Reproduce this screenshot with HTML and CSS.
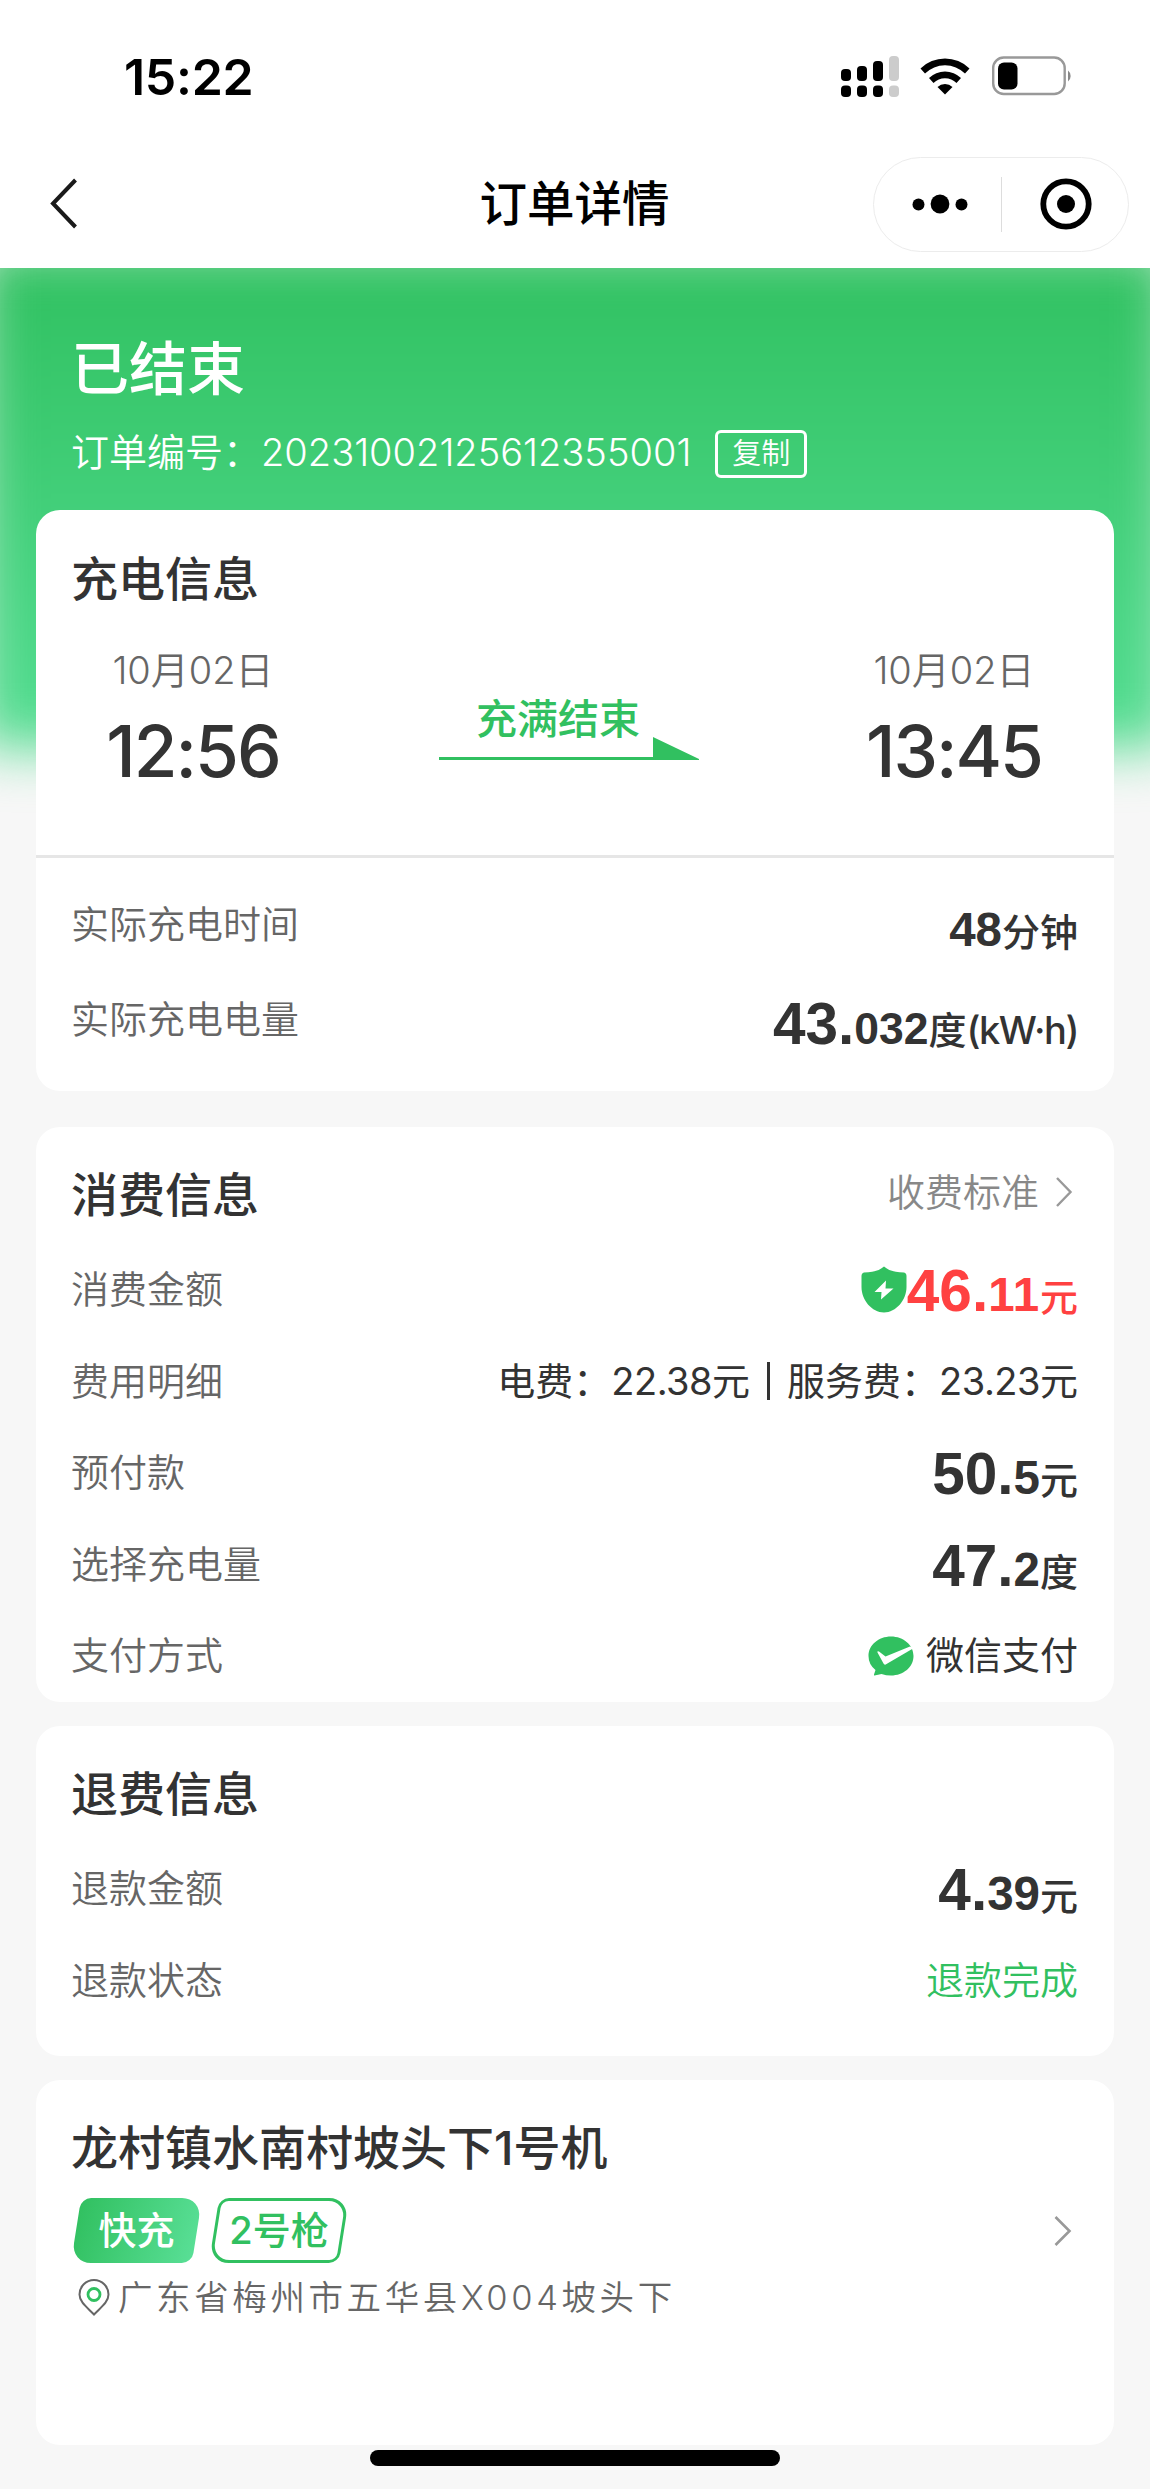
FILE: index.html
```html
<!DOCTYPE html>
<html lang="zh-CN">
  <head>
    <meta charset="utf-8">
    <meta name="viewport" content="width=device-width, initial-scale=1.0">
    <title>订单详情</title>
    <link rel="stylesheet" href="styles.css">
  </head>
  <body>
    <header class="top">
      <div class="statusbar">
        <span class="clock">15:22</span>
        <div class="indicators">
          <svg class="signal" width="59" height="41" viewBox="0 0 59 41">
            <rect x="0" y="13" width="10" height="12" rx="4"/>
            <rect x="16" y="10" width="10" height="15" rx="4"/>
            <rect x="32" y="5" width="10" height="20" rx="4"/>
            <rect x="48" y="0" width="10" height="25" rx="4" fill="#ccc"/>
            <rect x="0" y="29.500" width="10" height="11.500" rx="4"/>
            <rect x="16" y="29.500" width="10" height="11.500" rx="4"/>
            <rect x="32" y="29.500" width="10" height="11.500" rx="4"/>
            <rect x="48" y="29.500" width="10" height="11.500" rx="4" fill="#ccc"/>
          </svg>
          <svg class="wifi" width="50" height="38" viewBox="0 0 50 38">
            <path d="M0.500 11.500A35 35 0 0 1 49.500 11.500L45 16.500A28.500 28.500 0 0 0 5 16.500Z"/>
            <path d="M9 21A23 23 0 0 1 41 21L36.500 26A16.500 16.500 0 0 0 13.500 26Z"/>
            <path d="M17.500 30A11 11 0 0 1 32.500 30L25 37.500Z"/>
          </svg>
          <svg class="battery" width="82" height="40" viewBox="0 0 82 40">
            <rect x="1.200" y="1.500" width="71.500" height="36.500" rx="10.500" fill="none" stroke="#999" stroke-width="2.400"/>
            <rect x="6" y="6.500" width="19.500" height="27" rx="6"/>
            <path d="M76 14.500a7 7 0 0 1 0 11Z" fill="#888"/>
          </svg>
        </div>
      </div>
      <div class="navbar">
        <svg class="back" width="30" height="52" viewBox="0 0 30 52">
          <path d="M26.500 2L4 25.500L26.500 49" fill="none" stroke="#1a1a1a" stroke-width="4"/>
        </svg>
        <h1>订单详情</h1>
        <div class="capsule">
          <svg width="56" height="20" viewBox="0 0 56 20">
            <circle cx="6.500" cy="10.500" r="6"/>
            <circle cx="28" cy="10" r="9.400"/>
            <circle cx="49.500" cy="10.500" r="6"/>
          </svg>
          <i class="capsule-line"></i>
          <svg width="52" height="52" viewBox="0 0 52 52">
            <circle cx="26" cy="26" r="22.700" fill="none" stroke="#000" stroke-width="5.800"/>
            <circle cx="26" cy="26" r="9"/>
          </svg>
        </div>
      </div>
    </header>

    <main>
      <div class="glow"></div>
      <section class="hero">
        <h2>已结束</h2>
        <div class="order-no">
          <span>订单编号：</span>
          <span class="number">20231002125612355001</span>
          <button class="copy">复制</button>
        </div>
      </section>

      <section class="card charge">
        <div class="card-head"><h3>充电信息</h3></div>
        <div class="trip">
          <div class="point">
            <div class="date">10月02日</div>
            <div class="time">12:56</div>
          </div>
          <div class="arrow">
            <div class="reason">充满结束</div>
            <svg width="260" height="24" viewBox="0 0 260 24">
              <path d="M0 20H214V0L260 22V23H0Z" fill="#31c060"/>
            </svg>
          </div>
          <div class="point">
            <div class="date">10月02日</div>
            <div class="time">13:45</div>
          </div>
        </div>
        <div class="row">
          <span class="label">实际充电时间</span>
          <span class="value amount"><small>48</small>分钟</span>
        </div>
        <div class="row row-power">
          <span class="label">实际充电电量</span>
          <span class="value amount"><b>43.</b><small>032</small>度<span class="unit">(kW·h)</span></span>
        </div>
      </section>

      <section class="card fee">
        <div class="card-head">
          <h3>消费信息</h3>
          <a class="more">收费标准
            <svg width="18" height="32" viewBox="0 0 18 32">
              <path d="M2 2L15.500 16L2 30" fill="none" stroke="#999" stroke-width="2.400"/>
            </svg>
          </a>
        </div>
        <div class="row">
          <span class="label">消费金额</span>
          <div class="with-shield">
            <svg class="shield" width="46" height="47" viewBox="0 0 46 47">
              <path d="M23 0.500C27 4 33 6.500 43 6.500Q45.500 7 45.500 10V21C45.500 34 35 46.500 23 46.500S0.500 34 0.500 21V10Q0.500 7 3 6.500C13 6.500 19 4 23 0.500Z" fill="#31c060"/>
              <path d="M25 14.500L13.500 26H20.500L20 33.500L32.500 22.500H24.500Z" fill="#fff"/>
            </svg>
            <span class="value amount red"><b>46.</b><small class="ones">11</small>元</span>
          </div>
        </div>
        <div class="row">
          <span class="label">费用明细</span>
          <span class="value detail">电费：<span>22.38</span>元<i class="bar"></i>服务费：<span>23.23</span>元</span>
        </div>
        <div class="row">
          <span class="label">预付款</span>
          <span class="value amount"><b>50.</b><small>5</small>元</span>
        </div>
        <div class="row">
          <span class="label">选择充电量</span>
          <span class="value amount"><b>47.</b><small>2</small>度</span>
        </div>
        <div class="row">
          <span class="label">支付方式</span>
          <span class="value pay">
            <svg width="46" height="40" viewBox="0 0 46 40">
              <path d="M23 0.500C35.500 0.500 45.500 9 45.500 20S35.500 39.500 23 39.500Q18 39.500 13.500 38L6.500 39.500Q5.500 39.500 6 38.500L7.500 34Q0.500 28.500 0.500 20C0.500 9 10.500 0.500 23 0.500Z" fill="#31c060"/>
              <path d="M9.500 16.500Q9 14.500 11 15.500L17.500 20.500L42 10.500Q44.500 11 45 12.500L18.500 28Q16.500 29.500 15.500 27.500Z" fill="#fff"/>
            </svg>
            微信支付
          </span>
        </div>
      </section>

      <section class="card refund">
        <div class="card-head"><h3>退费信息</h3></div>
        <div class="row">
          <span class="label">退款金额</span>
          <span class="value amount"><b>4.</b><small>39</small>元</span>
        </div>
        <div class="row">
          <span class="label">退款状态</span>
          <span class="value done">退款完成</span>
        </div>
      </section>

      <section class="card station">
        <div class="card-head"><h3>龙村镇水南村坡头下1号机</h3></div>
        <div class="tags">
          <span class="tag tag-fast">快充</span>
          <span class="tag tag-gun">2号枪</span>
          <svg class="go" width="20" height="32" viewBox="0 0 20 32">
            <path d="M2.500 2L16.500 16L2.500 30" fill="none" stroke="#999" stroke-width="2.600"/>
          </svg>
        </div>
        <div class="address">
          <svg width="32" height="37" viewBox="0 0 32 37">
            <path d="M16 35.500C10 29 1.500 23.500 1.500 15.500A14.500 14.500 0 0 1 30.500 15.500C30.500 23.500 22 29 16 35.500Z" fill="none" stroke="#666" stroke-width="2"/>
            <circle cx="16" cy="15.500" r="6" fill="none" stroke="#31c060" stroke-width="2.800"/>
          </svg>
          <span>广东省梅州市五华县X004坡头下</span>
        </div>
      </section>
    </main>
    <div class="home-bar"></div>
  </body>
</html>
```

FILE: styles.css
```css
* {
  box-sizing: border-box;
  margin: 0;
  padding: 0;
}
body {
  background-color: #f7f7f7;
  color: #333;
  font-family: Inter, 'Noto Sans CJK SC', sans-serif;
  font-size: 38px;
  height: 2489px;
  overflow: hidden;
}
svg {
  display: block;
  flex: none;
}

/* top */
.top {
  position: relative;
  z-index: 2;
  height: 268px;
  background-color: #fff;
  color: #000;
}
.statusbar {
  display: flex;
  justify-content: space-between;
  height: 140px;
  padding: 46px 76px 0 124px;
}
.clock {
  font-size: 50px;
  font-weight: 600;
  line-height: 62px;
  letter-spacing: -.3px;
}
.indicators {
  display: flex;
  padding-top: 10px;
}
.wifi {
  margin: 1px 22px 0 20px;
}
.navbar {
  display: grid;
  grid-template-columns: 276px 1fr 277px;
  align-items: center;
  height: 128px;
}
.back {
  margin-left: 49px;
}
h1 {
  font-size: 47.500px;
  font-weight: 500;
  line-height: 60px;
  text-align: center;
}
.capsule {
  display: flex;
  align-items: center;
  width: 256px;
  height: 95px;
  padding-left: 38px;
  border: 1px solid #ececec;
  border-radius: 48px;
}
.capsule-line {
  width: 1px;
  height: 55px;
  margin: 0 38px 0 33px;
  background-color: #ddd;
}

/* hero */
main {
  position: relative;
  padding: 0 36px;
}
.glow {
  position: absolute;
  z-index: -1;
  top: -24px;
  left: -24px;
  right: -24px;
  height: 504px;
  background: linear-gradient(#2fc05f, #54dd92);
  filter: blur(27px);
}
.hero {
  height: 242px;
  padding: 66px 36px 0 35px;
  color: #fff;
}
h2 {
  font-size: 58px;
  font-weight: 500;
  line-height: 70px;
}
.order-no {
  display: flex;
  align-items: center;
  height: 48px;
  margin-top: 26px;
  font-weight: 350;
  line-height: 44px;
}
.order-no span {
  padding-bottom: 4px;
}
.copy {
  width: 92px;
  height: 48px;
  margin-left: 24px;
  border: 3px solid #fff;
  border-radius: 6px;
  background: none;
  color: #fff;
  font: 350 29px/42px Inter, 'Noto Sans CJK SC', sans-serif;
}

/* cards */
.card {
  background-color: #fff;
  border-radius: 24px;
  margin-bottom: 24px;
}
.card-head {
  display: flex;
  justify-content: space-between;
  height: 117.500px;
  padding: 38px 36px 0 35px;
}
h3 {
  font-size: 47px;
  font-weight: 500;
  line-height: 60px;
}
.row {
  display: flex;
  justify-content: space-between;
  height: 91.500px;
  padding: 0 36px 0 35px;
  line-height: 91px;
}
.label {
  color: #666;
  font-weight: 350;
}
.amount {
  padding-top: 8px;
  font-weight: 500;
}
.amount b, .amount small {
  font-family: 'Liberation Sans', sans-serif;
  font-weight: bold;
  font-size: 47.500px;
  line-height: 0;
}
.amount b {
  font-size: 58.500px;
}
.red {
  color: #ff4141;
}
.done {
  color: #31c060;
  font-weight: 350;
}

/* charge */
.charge {
  height: 581px;
  margin-bottom: 35.500px;
}
.charge .card-head {
  height: 137px;
  padding-top: 39px;
}
.trip {
  display: grid;
  grid-template-columns: 240px 1fr 240px;
  height: 211px;
  margin-bottom: 19px;
  padding: 0 40px 0 37px;
  border-bottom: 3px solid #e6e6e6;
}
.point {
  text-align: center;
}
.date {
  color: #666;
  font-weight: 350;
  line-height: 47px;
}
.time {
  margin-top: 17px;
  font-size: 71px;
  font-weight: 500;
  line-height: 80px;
  letter-spacing: -2px;
}
.arrow {
  padding: 50px 0 0 126px;
}
.reason {
  width: 238px;
  height: 40px;
  color: #31c060;
  font-size: 41px;
  font-weight: 500;
  line-height: 44px;
  text-align: center;
}
.charge .row {
  height: 95px;
  line-height: 95px;
}
.row-power .amount {
  padding-top: 11px;
}
.row-power small {
  font-size: 44.500px;
}
.unit {
  letter-spacing: -1.500px;
}

/* fee */
.fee {
  height: 575px;
}
.more {
  display: flex;
  align-items: center;
  gap: 16px;
  height: 54px;
  padding-right: 5px;
  color: #888;
  font-weight: 350;
  line-height: 54px;
}
.with-shield {
  display: flex;
}
.shield {
  margin-top: 22px;
}
.ones {
  letter-spacing: .800px;
}
.detail {
  display: flex;
  align-items: center;
}
.detail span {
  letter-spacing: -.500px;
}
.bar {
  width: 3px;
  height: 38px;
  margin: 0 17px;
  background-color: #333;
}
.pay {
  display: flex;
  align-items: center;
  gap: 12px;
}

.refund {
  height: 330px;
}

/* station */
.station {
  height: 365px;
  margin-bottom: 0;
}
.station .card-head {
  height: 118px;
}
.tags {
  display: flex;
  align-items: center;
  padding: 0 41px 0 37px;
}
.tag {
  position: relative;
  z-index: 1;
  height: 65px;
  font-weight: 500;
  line-height: 65px;
  text-align: center;
}
.tag::before {
  content: '';
  position: absolute;
  z-index: -1;
  top: 0;
  bottom: 0;
  left: 3px;
  right: 3px;
  border-radius: 10px 20px 10px 20px;
  transform: skewX(-9deg);
}
.tag-fast {
  width: 127px;
  margin-right: 11px;
  color: #fff;
}
.tag-fast::before {
  background: linear-gradient(100deg, #31c060, #59df96);
}
.tag-gun {
  width: 136px;
  color: #31c060;
}
.tag-gun::before {
  border: 3px solid #31c060;
}
.go {
  margin-top: 2px;
  margin-left: auto;
}
.address {
  display: flex;
  align-items: center;
  height: 50px;
  margin-top: 10px;
  padding-left: 42px;
  color: #666;
  font-size: 34.500px;
  font-weight: 350;
  line-height: 50px;
  letter-spacing: 3.600px;
}
.address span {
  margin-left: 8px;
}

.home-bar {
  width: 410px;
  height: 16px;
  margin: 5px auto 0;
  border-radius: 8px;
  background-color: #000;
}
```
